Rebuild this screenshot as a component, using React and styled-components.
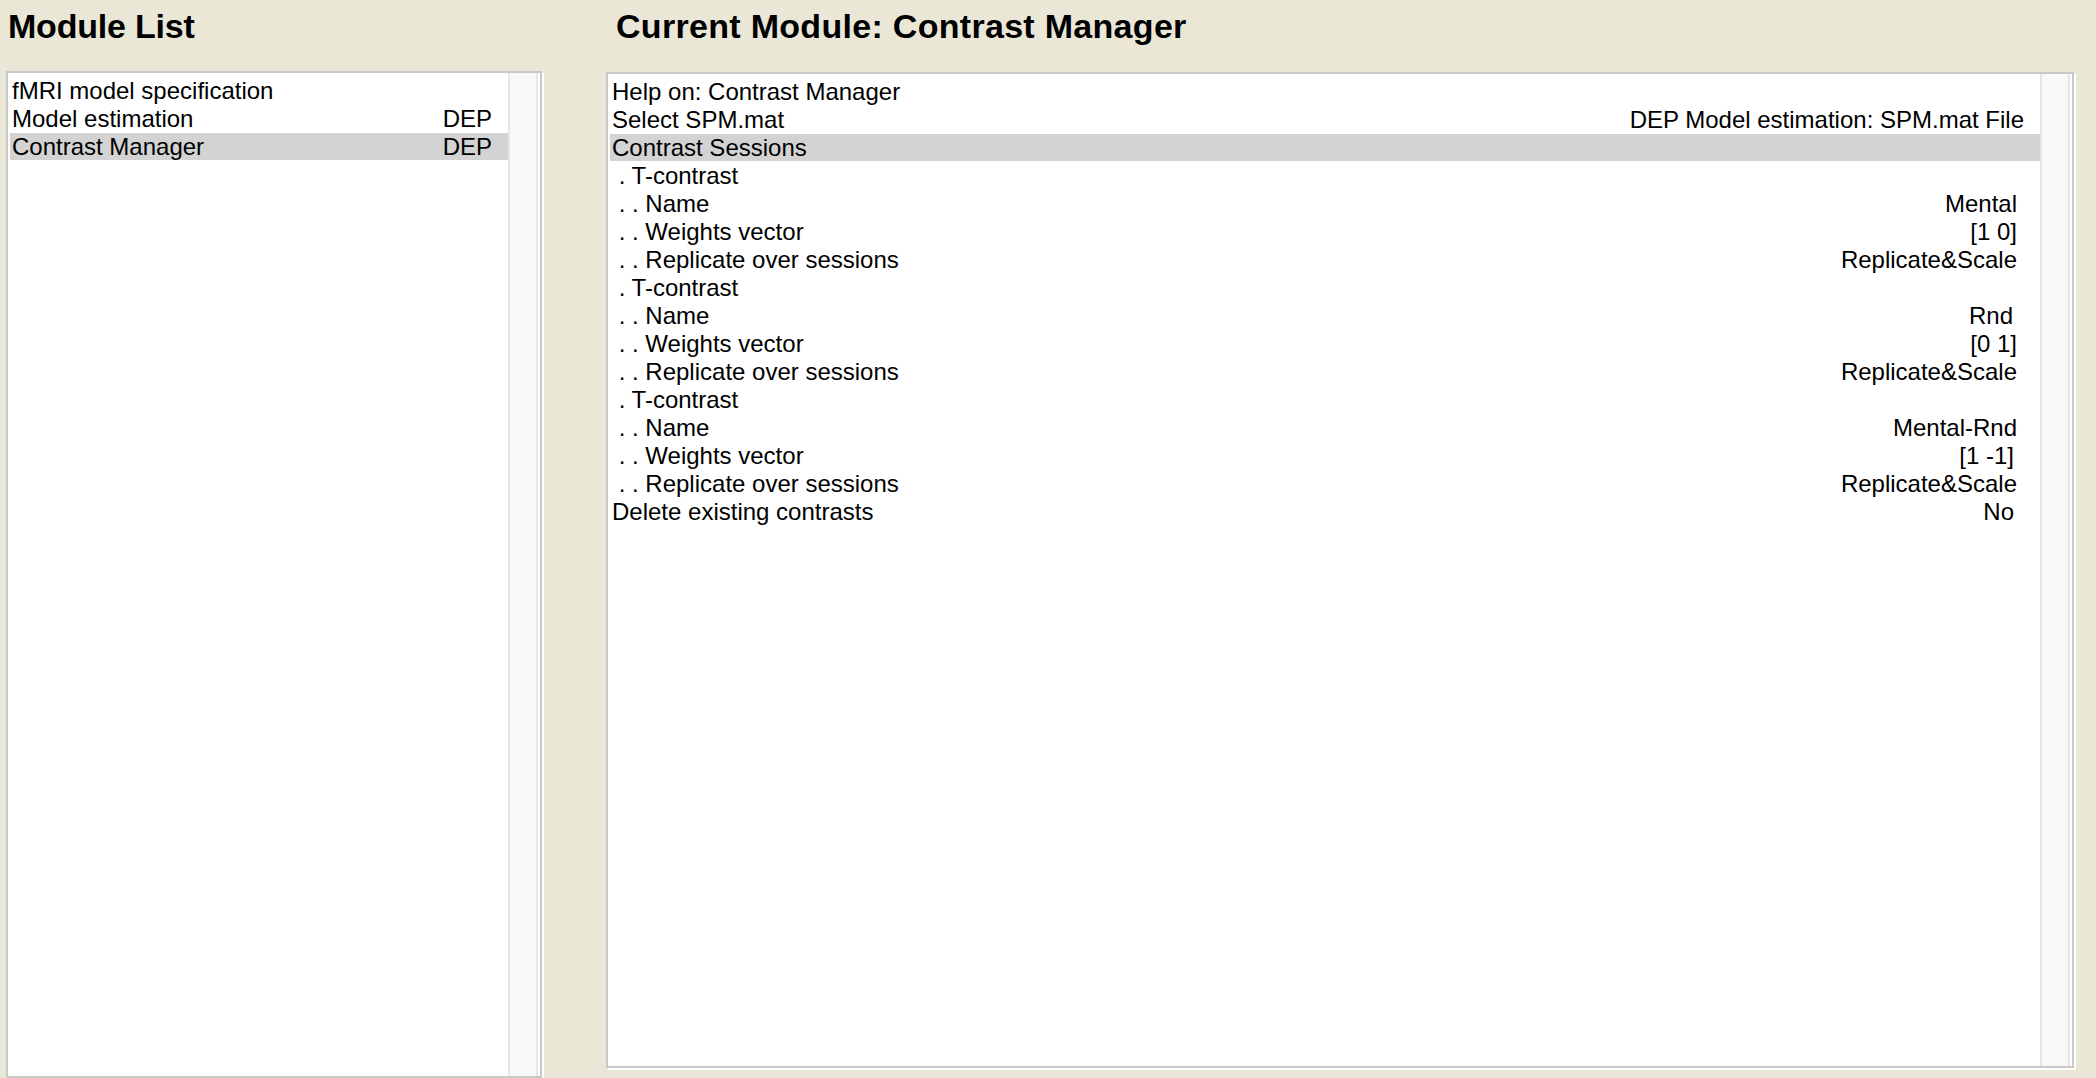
import React from "react";
import styled, { createGlobalStyle } from "styled-components";

const GlobalStyle = createGlobalStyle`
  html, body {
    margin: 0;
    padding: 0;
    background: #eae7d7;
    overflow: hidden;
  }
  body {
    font-family: "Liberation Sans", Arial, sans-serif;
    color: #000;
  }
`;

const Page = styled.div`
  display: flex;
  gap: 64px;
  padding-left: 6px;
  height: 1078px;
  box-sizing: border-box;
`;

const Column = styled.div`
  display: flex;
  flex-direction: column;
  width: ${(p) => p.width}px;
`;

const Heading = styled.h1`
  margin: 0;
  height: 72px;
  padding: 6px 0 0 ${(p) => p.indent || 2}px;
  box-sizing: border-box;
  font-size: 34px;
  font-weight: 700;
  letter-spacing: ${(p) => p.spacing ?? -0.2}px;
  line-height: 40px;
`;

const Box = styled.div`
  display: flex;
  background: #fff;
  border: 2px solid #c8c8c8;
  box-shadow: 2px 2px 0 #fff;
  box-sizing: border-box;
  height: ${(p) => p.height}px;
`;

const List = styled.div`
  flex: 1;
  display: flex;
  flex-direction: column;
  padding-top: 4px;
  padding-left: 2px;
`;

const Row = styled.div`
  display: flex;
  justify-content: space-between;
  align-items: center;
  height: 28px;
  padding-left: 2px;
  padding-right: ${(p) => p.pad || 16}px;
  font-size: 24px;
  white-space: pre;
  background: ${(p) => (p.selected ? "#d3d3d3" : "transparent")};
  box-shadow: ${(p) => (p.selected ? "inset 0 -1px 0 #fff" : "none")};
`;

const Scrollbar = styled.div`
  width: 26px;
  margin-right: 2px;
  background: #f8f8f8;
  border-left: 2px solid #e6e6e6;
  border-right: 2px solid #e6e6e6;
`;

const modules = [
  { label: "fMRI model specification", dep: "" },
  { label: "Model estimation", dep: "DEP" },
  { label: "Contrast Manager", dep: "DEP", selected: true },
];

const items = [
  { label: "Help on: Contrast Manager", value: "" },
  { label: "Select SPM.mat", value: "DEP Model estimation: SPM.mat File", pad: 16 },
  { label: "Contrast Sessions", value: "", selected: true },
  { label: " . T-contrast", value: "" },
  { label: " . . Name", value: "Mental" },
  { label: " . . Weights vector", value: "[1 0]" },
  { label: " . . Replicate over sessions", value: "Replicate&Scale" },
  { label: " . T-contrast", value: "" },
  { label: " . . Name", value: "Rnd", pad: 27 },
  { label: " . . Weights vector", value: "[0 1]" },
  { label: " . . Replicate over sessions", value: "Replicate&Scale" },
  { label: " . T-contrast", value: "" },
  { label: " . . Name", value: "Mental-Rnd" },
  { label: " . . Weights vector", value: "[1 -1]", pad: 26 },
  { label: " . . Replicate over sessions", value: "Replicate&Scale" },
  { label: "Delete existing contrasts", value: "No", pad: 26 },
];

export default function App() {
  return (
    <>
      <GlobalStyle />
      <Page>
        <Column width={536}>
          <Heading indent={2}>Module List</Heading>
          <Box height={1020}>
            <List>
              {modules.map((m, i) => (
                <Row key={i} selected={m.selected}>
                  <span>{m.label}</span>
                  <span>{m.dep}</span>
                </Row>
              ))}
            </List>
            <Scrollbar />
          </Box>
        </Column>
        <Column width={1468}>
          <Heading indent={10} spacing={0.3}>
            Current Module: Contrast Manager
          </Heading>
          <Box height={996}>
            <List>
              {items.map((it, i) => (
                <Row key={i} selected={it.selected} pad={it.pad || 23}>
                  <span>{it.label}</span>
                  <span>{it.value}</span>
                </Row>
              ))}
            </List>
            <Scrollbar />
          </Box>
        </Column>
      </Page>
    </>
  );
}
